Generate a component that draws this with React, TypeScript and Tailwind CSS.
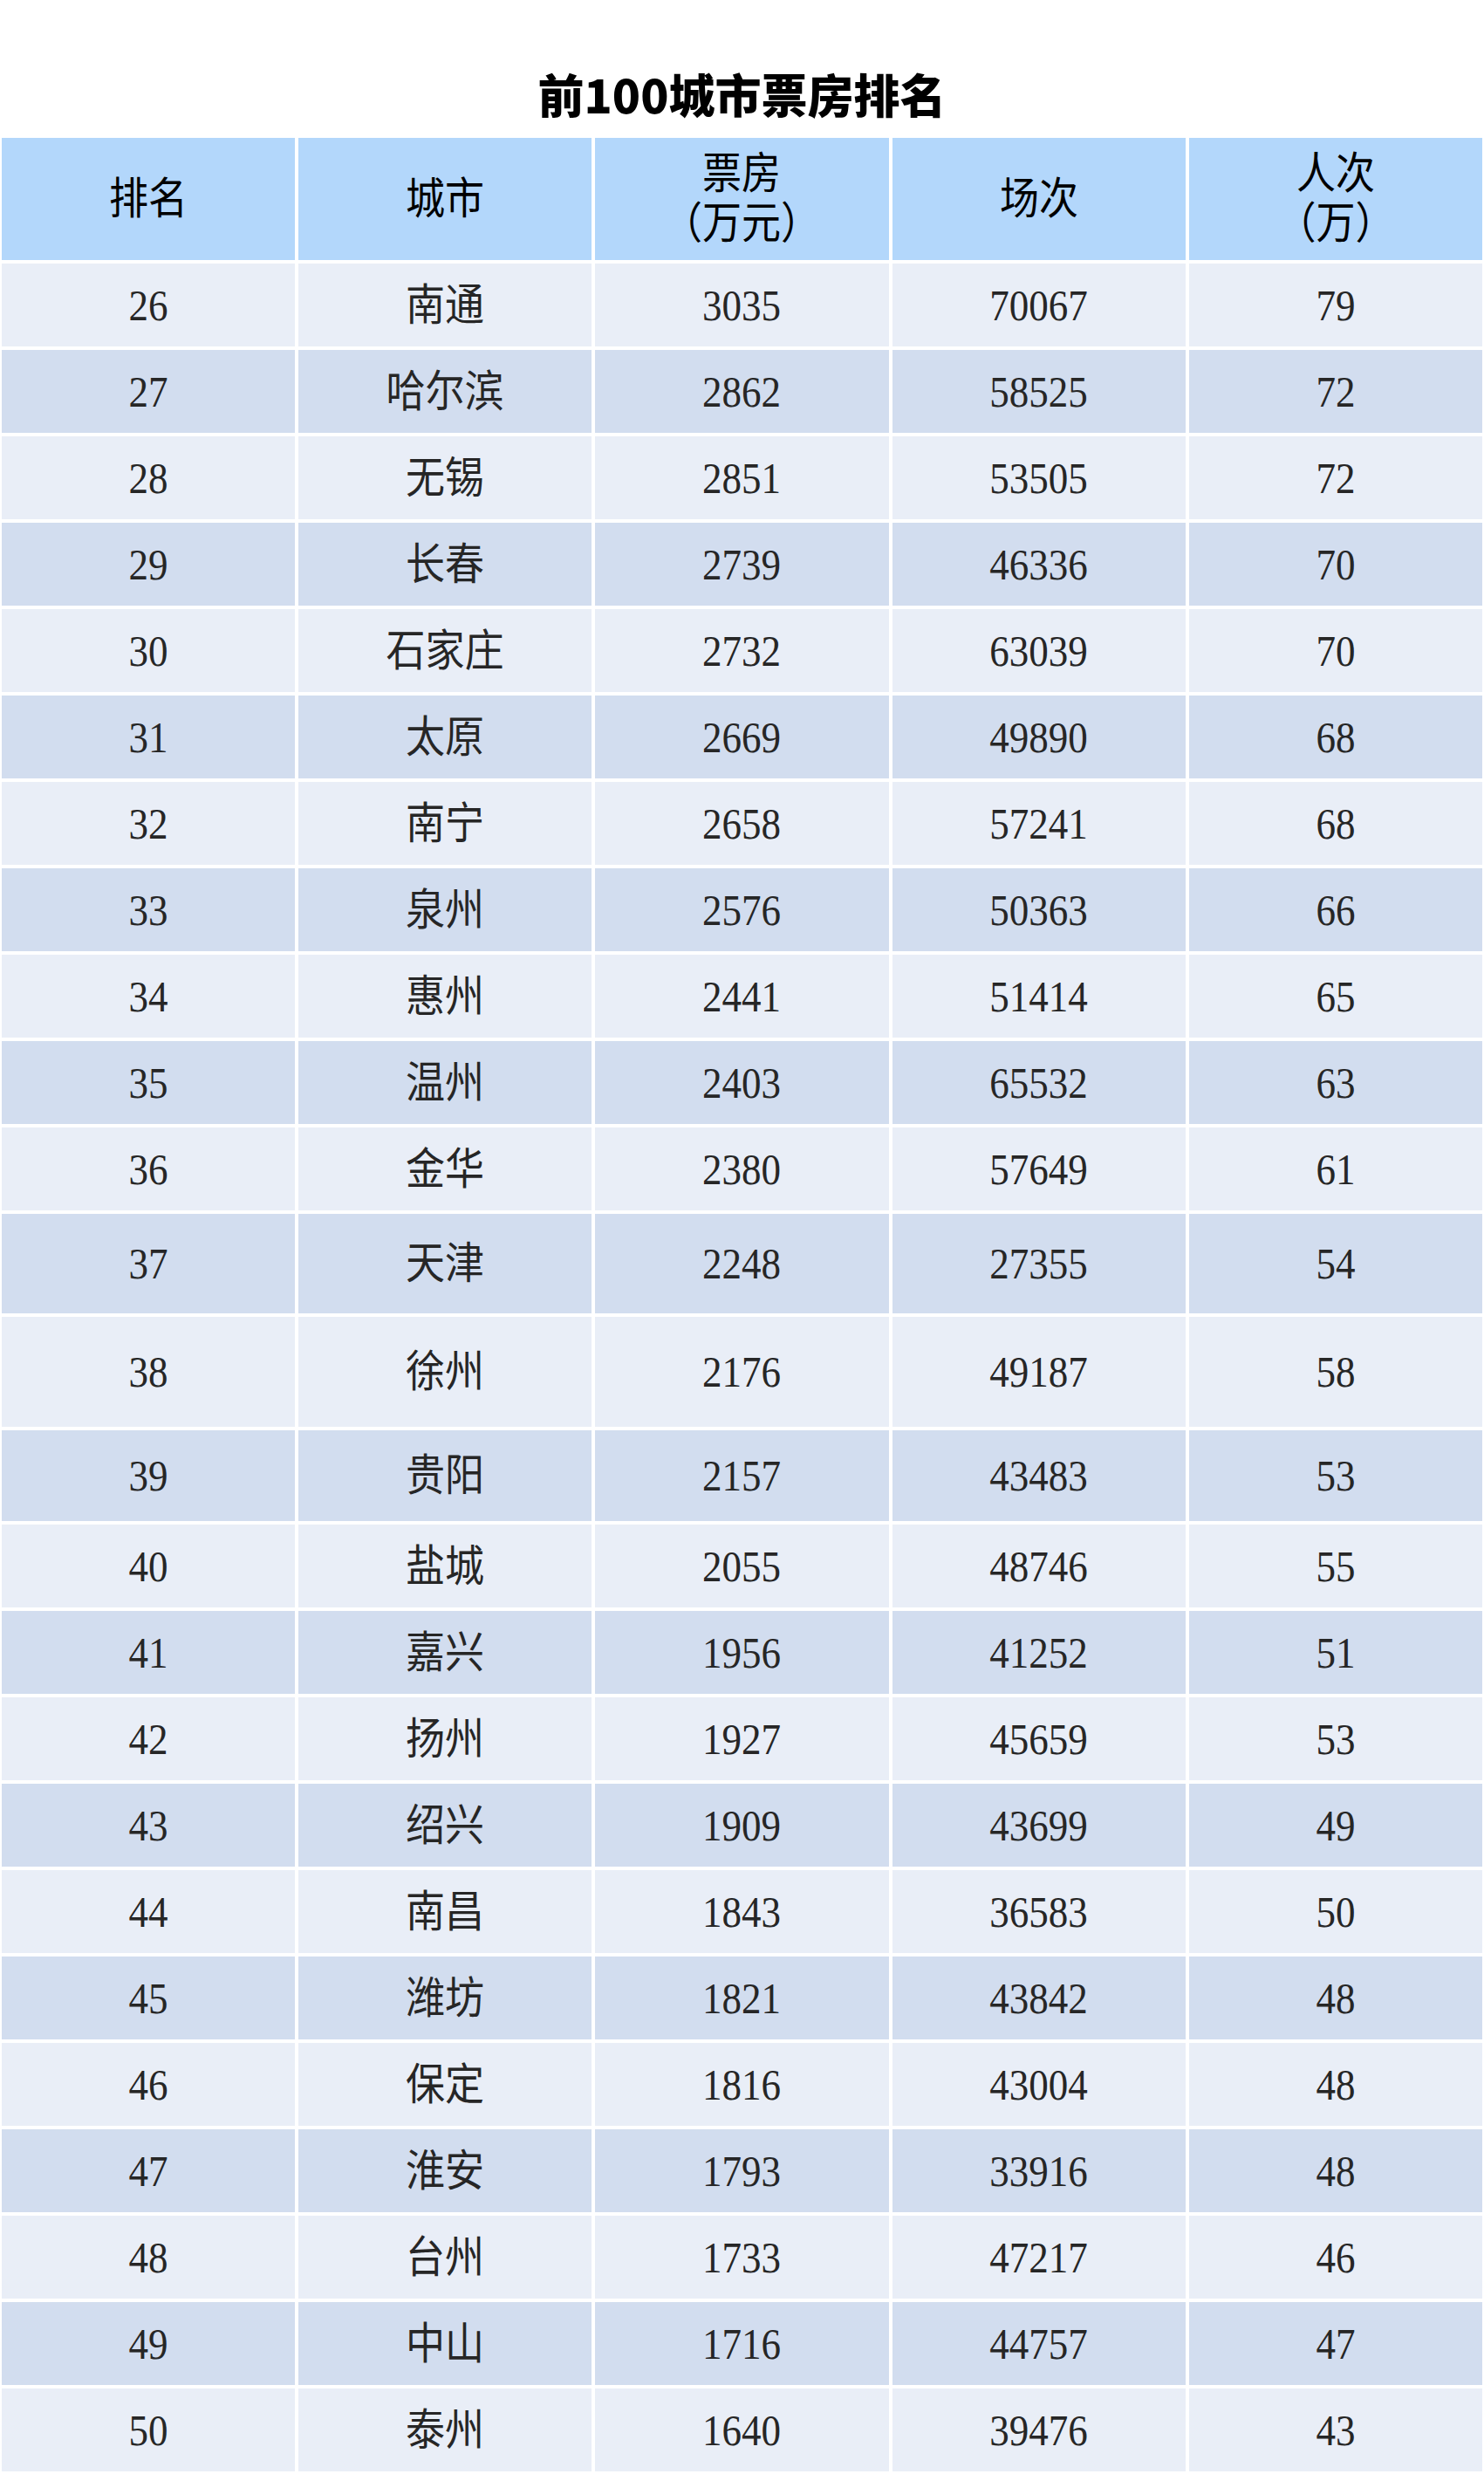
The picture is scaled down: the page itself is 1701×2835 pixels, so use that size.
const rows: [number, string, number, number, number][] = [
  [26, '南通', 3035, 70067, 79],
  [27, '哈尔滨', 2862, 58525, 72],
  [28, '无锡', 2851, 53505, 72],
  [29, '长春', 2739, 46336, 70],
  [30, '石家庄', 2732, 63039, 70],
  [31, '太原', 2669, 49890, 68],
  [32, '南宁', 2658, 57241, 68],
  [33, '泉州', 2576, 50363, 66],
  [34, '惠州', 2441, 51414, 65],
  [35, '温州', 2403, 65532, 63],
  [36, '金华', 2380, 57649, 61],
  [37, '天津', 2248, 27355, 54],
  [38, '徐州', 2176, 49187, 58],
  [39, '贵阳', 2157, 43483, 53],
  [40, '盐城', 2055, 48746, 55],
  [41, '嘉兴', 1956, 41252, 51],
  [42, '扬州', 1927, 45659, 53],
  [43, '绍兴', 1909, 43699, 49],
  [44, '南昌', 1843, 36583, 50],
  [45, '潍坊', 1821, 43842, 48],
  [46, '保定', 1816, 43004, 48],
  [47, '淮安', 1793, 33916, 48],
  [48, '台州', 1733, 47217, 46],
  [49, '中山', 1716, 44757, 47],
  [50, '泰州', 1640, 39476, 43],
]

// a few rows in the source sheet are taller than the rest
function rowHeight(rank: number) {
  if (rank === 37) return 'h-[114px]'
  if (rank === 38) return 'h-[126px]'
  if (rank === 39) return 'h-[104px]'
  return 'h-[95px]'
}

const headers: string[][] = [['排名'], ['城市'], ['票房', '（万元）'], ['场次'], ['人次', '（万）']]

export default function App() {
  return (
    <div className="w-[1701px] bg-white px-[2px] pb-[3px] font-['Liberation_Serif','Noto_Sans_CJK_SC',serif]">
      <div className="flex h-[158px] items-center justify-center pt-[56px]">
        <h1 className="font-['Noto_Sans_CJK_SC',sans-serif] text-[53px] font-black leading-none text-black">
          前100城市票房排名
        </h1>
      </div>

      <div className="flex flex-col gap-[4px]">
        <div className="grid h-[140px] grid-cols-5 gap-[4px]">
          {headers.map((lines, i) => (
            <div key={i} className="flex items-center justify-center bg-[#b3d7fb] text-black">
              <span className="inline-block scale-x-90 text-center text-[50px] leading-[57px]">
                {lines.map((l, j) => (
                  <div key={j}>{l}</div>
                ))}
              </span>
            </div>
          ))}
        </div>

        {rows.map((r, idx) => (
          <div key={r[0]} className={`grid grid-cols-5 gap-[4px] ${rowHeight(r[0])}`}>
            {r.map((v, j) => (
              <div
                key={j}
                className={`flex items-center justify-center text-[#262626] ${idx % 2 === 0 ? 'bg-[#e9eef7]' : 'bg-[#d2ddef]'}`}
              >
                <span className="inline-block scale-x-90 text-[50px] leading-none">{v}</span>
              </div>
            ))}
          </div>
        ))}
      </div>
    </div>
  )
}
